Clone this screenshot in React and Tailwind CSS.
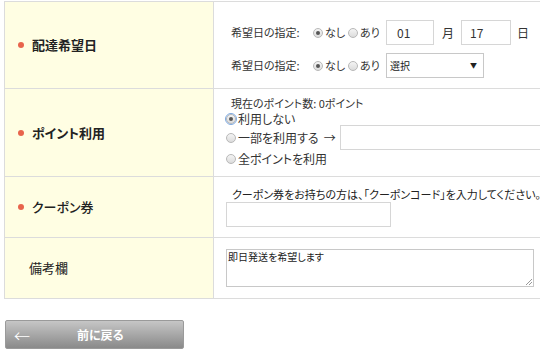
const jp = "font-['Noto_Sans_CJK_JP','Noto_Sans',sans-serif] [font-feature-settings:'palt']";

function Radio({ checked, focus }) {
  return (
    <span
      className={`inline-flex items-center justify-center w-[10px] h-[10px] rounded-full border border-[#b8b8b8] bg-gradient-to-b from-[#f4f4f4] to-[#dcdcdc] shrink-0 ${
        focus ? "outline outline-1 outline-[#7aa7e0] rounded-[2px]" : ""
      }`}
    >
      {checked && <span className="w-[4px] h-[4px] rounded-full bg-[#555]" />}
    </span>
  );
}

function Label({ children, bullet = true, weight = "font-bold" }) {
  return (
    <div className="w-[209px] shrink-0 bg-[#fffee3] border-r border-[#dcdcdc] flex items-center pl-[13px]">
      {bullet ? (
        <span className="w-[6px] h-[6px] rounded-full bg-[#e8644c] mr-[8px]" />
      ) : (
        <span className="w-[11px]" />
      )}
      <span className={`text-[13px] text-[#222] ${weight}`}>{children}</span>
    </div>
  );
}

function DateRadios() {
  return (
    <>
      <span className="w-[82px]">希望日の指定:</span>
      <Radio checked />
      <span className="ml-[2px] w-[23px]">なし</span>
      <Radio />
      <span className="ml-[2px] w-[26px]">あり</span>
    </>
  );
}

export default function App() {
  return (
    <div className={`w-[540px] h-[360px] overflow-hidden bg-white text-[11px] text-[#333] ${jp}`}>
      <div className="ml-[4px] mt-[1px] w-[600px] border border-[#dcdcdc]">
        {/* 配達希望日 */}
        <div className="flex h-[87px] border-b border-[#dcdcdc]">
          <Label>配達希望日</Label>
          <div className="flex flex-col pl-[17px] pt-[18px] gap-[8px]">
            <div className="flex items-center h-[25px]">
              <DateRadios />
              <div className="w-[48px] h-[25px] border border-[#d6d6d6] flex items-center pl-[10px] text-[12px]">01</div>
              <span className="ml-[8px] w-[19px] text-[12px]">月</span>
              <div className="w-[50px] h-[25px] border border-[#d6d6d6] flex items-center pl-[8px] text-[12px]">17</div>
              <span className="ml-[6px] text-[12px]">日</span>
            </div>
            <div className="flex items-center h-[25px]">
              <DateRadios />
              <div className="w-[98px] h-[25px] border border-[#c8c8c8] flex items-center justify-between pl-[3px] pr-[6px] text-[10px] text-[#222]">
                <span>選択</span>
                <span className="text-[7px]">▼</span>
              </div>
            </div>
          </div>
        </div>

        {/* ポイント利用 */}
        <div className="flex h-[88px] border-b border-[#dcdcdc]">
          <Label>ポイント利用</Label>
          <div className="flex flex-col pl-[12px] pt-[7px]">
            <div className="pl-[5px] leading-[14px]">現在のポイント数: 0ポイント</div>
            <div className="flex items-center leading-[15px] text-[12px] mt-[1px]">
              <Radio checked focus />
              <span className="ml-[2px]">利用しない</span>
            </div>
            <div className="flex items-center h-[25px] mt-[-1px] text-[12px]">
              <Radio />
              <span className="ml-[2px]">一部を利用する</span>
              <span className="ml-[5px] mr-[4px]">→</span>
              <div className="w-[220px] h-[25px] border border-[#d6d6d6]" />
            </div>
            <div className="flex items-center mt-[1px] leading-[16px] text-[12px]">
              <Radio />
              <span className="ml-[2px]">全ポイントを利用</span>
            </div>
          </div>
        </div>

        {/* クーポン券 */}
        <div className="flex h-[61px] border-b border-[#dcdcdc]">
          <Label weight="font-medium">クーポン券</Label>
          <div className="flex flex-col pl-[12px] pt-[10px]">
            <div className="pl-[6px] leading-[14px] text-[#222]">
              クーポン券をお持ちの方は、「クーポンコード」を入力してください。
            </div>
            <div className="w-[165px] h-[25px] border border-[#d6d6d6] mt-[1px]" />
          </div>
        </div>

        {/* 備考欄 */}
        <div className="flex h-[60px]">
          <Label bullet={false} weight="font-normal">備考欄</Label>
          <div className="pl-[12px] pt-[11px]">
            <div className="relative w-[308px] h-[38px] border border-[#c8c8c8] text-[10px] text-[#222] leading-[12px] pl-[1px] pt-[1px]">
              即日発送を希望します
              <svg className="absolute right-[1px] bottom-[1px]" width="6" height="6" viewBox="0 0 6 6">
                <path d="M6 0 L0 6 M6 3 L3 6" stroke="#999" strokeWidth="1" />
              </svg>
            </div>
          </div>
        </div>
      </div>

      <div className="mt-[21px] ml-[5px] w-[179px] h-[29px] rounded-[2px] border border-[#9a9a9a] bg-gradient-to-b from-[#c6c6c6] to-[#8a8a8a] flex items-center text-white">
        <span className="ml-[8px] text-[16px] leading-none font-light">←</span>
        <span className="ml-[47px] text-[12px] font-bold">前に戻る</span>
      </div>
    </div>
  );
}
